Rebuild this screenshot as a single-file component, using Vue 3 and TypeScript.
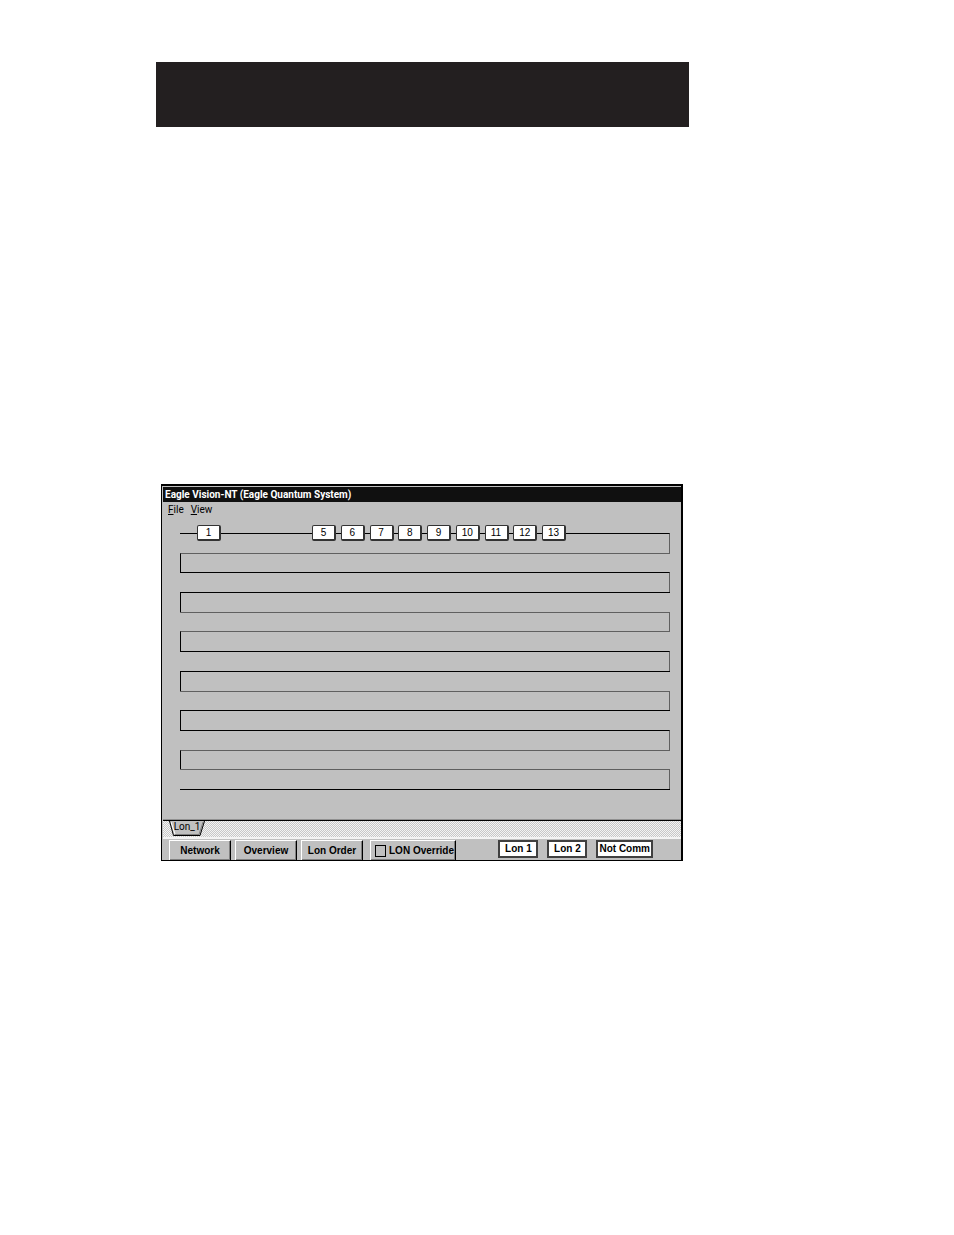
<script setup lang="ts">
import { ref } from 'vue'

const nodes: number[] = [5, 6, 7, 8, 9, 10, 11, 12, 13]
const views: string[] = ['Network', 'Overview', 'Lon Order']
const statuses: string[] = ['Lon 1', 'Lon 2', 'Not Comm']
const wireRows = 13
const lightRows = new Set<number>([2, 5, 6, 9, 12, 13])
const override = ref(false)
</script>

<template>
  <main class="page">
    <div class="banner"></div>
    <section class="window">
      <h1 class="title">Eagle Vision-NT (Eagle Quantum System)</h1>
      <nav class="menu">
        <button type="button"><u>F</u>ile</button>
        <button type="button"><u>V</u>iew</button>
      </nav>
      <div class="loop">
        <div class="wires">
          <div v-for="n in wireRows" :key="n" class="wire" :class="{ light: lightRows.has(n) }"></div>
        </div>
        <div class="nodes">
          <button type="button" class="node">1</button>
          <div class="group">
            <button v-for="n in nodes" :key="n" type="button" class="node">{{ n }}</button>
          </div>
        </div>
      </div>
      <div class="tabs">
        <button type="button" class="tab">
          <svg viewBox="0 0 38 16" aria-hidden="true">
            <path d="M1 0 L6 15 H32 L37 0" fill="#c0c0c0" />
            <path d="M3 1 L7 13" fill="none" stroke="#fff" />
            <path d="M1.5 0 L5.5 14.5 H32 L36.5 0" fill="none" stroke="#000" />
            <path d="M7 13.5 H31 L35 1" fill="none" stroke="#808080" />
          </svg>
          <span>Lon_1</span>
        </button>
      </div>
      <footer class="toolbar">
        <button v-for="v in views" :key="v" type="button" class="push">{{ v }}</button>
        <label class="push check"><input v-model="override" type="checkbox" />LON Override</label>
        <div class="statuses">
          <span v-for="s in statuses" :key="s" class="status">{{ s }}</span>
        </div>
      </footer>
    </section>
  </main>
</template>

<style>
body {
  margin: 0;
  background: #fff;
}
</style>

<style scoped>
.page {
  padding: 62px 265px 62px 156px;
  font-family: "Liberation Sans", Arial, sans-serif;
  font-size: 10px;
  line-height: 14px;
  color: #000;
}
button {
  margin: 0;
  padding: 0;
  border: 0;
  background: none;
  font: inherit;
  color: inherit;
}
.banner {
  height: 65px;
  background: #231f20;
}
.window {
  margin: 357px 6px 0 5px;
  border: solid #000;
  border-width: 2px 2px 1px 1px;
  background: #c0c0c0;
}
.title,
.menu,
.tab {
  font-family: Roboto, "Liberation Sans", sans-serif;
}
.title {
  margin: 1px 0 0 1px;
  padding: 0 2px;
  background: #101010;
  color: #fff;
  font-size: 10px;
  line-height: 15px;
  font-weight: bold;
}
.menu {
  display: flex;
  gap: 7px;
  padding: 1px 6px 0;
}
.loop {
  display: grid;
  padding: 8px 11px 30px 18px;
}
.wires,
.nodes {
  grid-area: 1 / 1;
}
.wires {
  display: grid;
  grid-template-rows: repeat(13, 1fr);
  height: 256px;
  margin-top: 8px;
  border-bottom: 1px solid #000;
}
.wire {
  border-top: 1px solid #000;
}
.wire:nth-child(odd) {
  border-right: 1px solid #606060;
}
.wire:nth-child(even) {
  border-left: 1px solid #000;
}
.wire.light {
  border-top-color: #606060;
}
.nodes {
  display: flex;
  align-items: flex-start;
  gap: 91px;
  padding-left: 17px;
}
.group {
  display: flex;
  justify-content: space-between;
  width: 254px;
}
.node {
  box-sizing: border-box;
  width: 24px;
  height: 16px;
  border: solid #333;
  border-width: 1px 2px 2px 1px;
  border-radius: 2px;
  background: #fff;
  line-height: 13px;
}
.tabs {
  margin-left: 1px;
  padding-left: 5px;
  height: 16px;
  border-top: 1px solid #000;
  box-shadow: 0 -1px #909090;
  background: repeating-conic-gradient(#c8c8c8 0 25%, #f4f4f4 0 50%) 0 0 / 2px 2px;
}
.tab {
  display: grid;
  width: 38px;
  height: 16px;
}
.tab > * {
  grid-area: 1 / 1;
}
.tab svg {
  width: 38px;
  height: 16px;
}
.tab span {
  line-height: 12px;
}
.toolbar {
  display: flex;
  margin-left: 1px;
  padding: 1px 28px 0 6px;
  gap: 4px;
  border-top: 2px solid #f4f4f4;
  font-weight: bold;
}
.push {
  box-sizing: border-box;
  width: 62px;
  height: 20px;
  border: solid;
  border-width: 1px 1px 0 1px;
  border-color: #fff #000 #000 #fff;
  box-shadow: inset -1px -1px #808080;
  line-height: 18px;
  white-space: nowrap;
}
.check {
  display: flex;
  align-items: center;
  gap: 3px;
  width: 86px;
  margin-left: 3px;
  padding-left: 4px;
}
.check input {
  appearance: none;
  box-sizing: border-box;
  flex: none;
  width: 11px;
  height: 12px;
  margin: 0;
  border: 1px solid #000;
}
.check input:checked {
  background: #000;
}
.statuses {
  display: flex;
  gap: 9px;
  margin-left: auto;
}
.status {
  box-sizing: border-box;
  min-width: 40px;
  height: 18px;
  padding: 0 1px;
  border: 2px solid #404040;
  background: #fff;
  text-align: center;
  white-space: nowrap;
}
</style>
